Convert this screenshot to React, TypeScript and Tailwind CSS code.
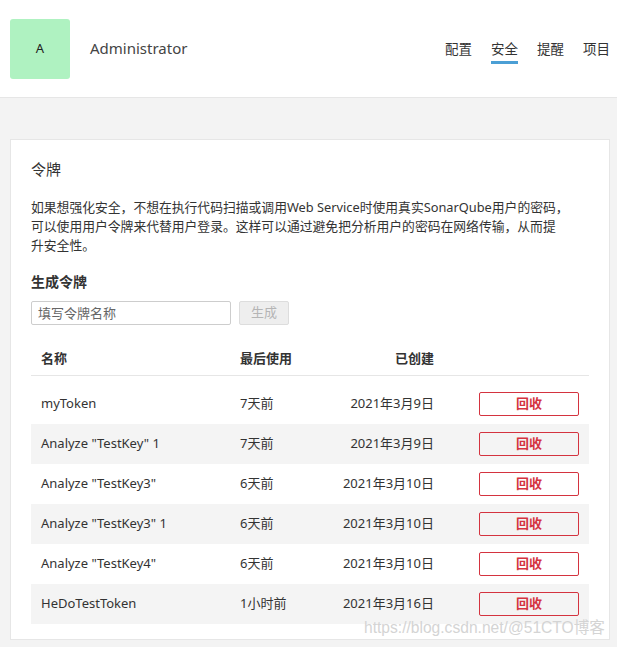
import * as React from "react";

type Token = { name: string; lastUsed: string; created: string };

const tokens: Token[] = [
  { name: "myToken", lastUsed: "7天前", created: "2021年3月9日" },
  { name: 'Analyze "TestKey" 1', lastUsed: "7天前", created: "2021年3月9日" },
  { name: 'Analyze "TestKey3"', lastUsed: "6天前", created: "2021年3月10日" },
  { name: 'Analyze "TestKey3" 1', lastUsed: "6天前", created: "2021年3月10日" },
  { name: 'Analyze "TestKey4"', lastUsed: "6天前", created: "2021年3月10日" },
  { name: "HeDoTestToken", lastUsed: "1小时前", created: "2021年3月16日" },
];

const navItems = ["配置", "安全", "提醒", "项目"];

export default function App() {
  return (
    <div className="relative h-[647px] overflow-hidden bg-[#f3f3f3] font-['Noto_Sans','Noto_Sans_CJK_SC',sans-serif] text-[13px] text-[#333]">
      <header className="flex h-[98px] items-center border-b border-[#e6e6e6] bg-white pl-[10px] pr-[7px]">
        <div className="flex h-[60px] w-[60px] items-center justify-center rounded-[3px] bg-[#aff2c1] text-[13px] text-[#222]">
          A
        </div>
        <div className="ml-[20px] text-[15px] text-[#444]">Administrator</div>
        <nav className="ml-auto flex items-center gap-[19px]">
          {navItems.map((item) => (
            <div key={item} className="relative text-[13.5px] leading-[20px] text-[#333]">
              {item}
              {item === "安全" && (
                <span className="absolute left-0 right-0 top-[22px] h-[3px] bg-[#4b9fd5]" />
              )}
            </div>
          ))}
        </nav>
      </header>

      <main className="pl-[10px] pr-[7px] pt-[41px]">
        <section className="border border-[#e6e6e6] bg-white px-[20px] pb-[15px] pt-[20px]">
          <h2 className="text-[15px] leading-[18px] text-[#333]">令牌</h2>
          <p className="mt-[20px] text-[12.8px] leading-[19px] text-[#333]">
            如果想强化安全，不想在执行代码扫描或调用Web Service时使用真实SonarQube用户的密码，
            <br />
            可以使用用户令牌来代替用户登录。这样可以通过避免把分析用户的密码在网络传输，从而提
            <br />
            升安全性。
          </p>

          <h3 className="mt-[17px] text-[14px] font-semibold leading-[20px] text-[#333]">生成令牌</h3>
          <div className="mt-[9px] flex items-center gap-[8px]">
            <input
              className="h-[24px] w-[200px] rounded-[2px] border border-[#cdcdcd] px-[6px] text-[13px] text-[#333] outline-none placeholder:text-[#666]"
              placeholder="填写令牌名称"
            />
            <button
              disabled
              className="h-[24px] w-[50px] rounded-[2px] border border-[#dddddd] bg-[#eeeeee] text-[13px] text-[#b5b5b5]"
            >
              生成
            </button>
          </div>

          <div className="mt-[18px]">
            <div className="grid h-[33px] grid-cols-[199px_100px_114px_145px] items-center border-b border-[#e6e6e6] font-semibold text-[#333]">
              <div className="pl-[10px]">名称</div>
              <div className="pl-[10px]">最后使用</div>
              <div className="pr-[10px] text-right">已创建</div>
              <div />
            </div>
            <div className="mt-[8px]">
              {tokens.map((t, i) => (
                <div
                  key={t.name}
                  className={`grid h-[40px] grid-cols-[199px_100px_114px_145px] items-center ${
                    i % 2 === 1 ? "bg-[#f4f4f4]" : "bg-white"
                  }`}
                >
                  <div className="pl-[10px]">{t.name}</div>
                  <div className="pl-[10px]">{t.lastUsed}</div>
                  <div className="pr-[10px] text-right">{t.created}</div>
                  <div className="flex justify-end pr-[10px]">
                    <button className="h-[24px] w-[100px] rounded-[2px] border border-[#d4333f] bg-transparent text-[13px] font-semibold text-[#d4333f]">
                      回收
                    </button>
                  </div>
                </div>
              ))}
            </div>
          </div>
        </section>
      </main>

      <div className="pointer-events-none absolute left-[364px] top-[616px] whitespace-nowrap font-['Liberation_Sans','Noto_Sans_CJK_SC',sans-serif] text-[15.6px] text-[#d4d4d4]">
        https://blog.csdn.net/@51CTO博客
      </div>
    </div>
  );
}
